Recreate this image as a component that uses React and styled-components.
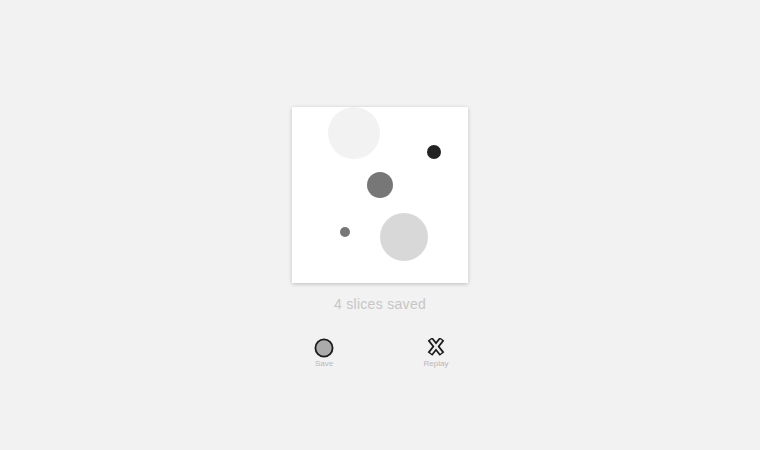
import React from "react";
import styled, { createGlobalStyle } from "styled-components";

const Global = createGlobalStyle`
  html, body { margin: 0; padding: 0; background: #f2f2f2; }
  body { font-family: "Liberation Sans", Arial, sans-serif; }
`;

const Page = styled.div`
  width: 760px;
  height: 450px;
  box-sizing: border-box;
  padding-top: 107px;
  display: flex;
  flex-direction: column;
  align-items: center;
  background: #f2f2f2;
`;

const Card = styled.div`
  position: relative;
  width: 176px;
  height: 176px;
  background: #ffffff;
  box-shadow: 0 1px 4px rgba(0, 0, 0, 0.22);
`;

const Dot = styled.div`
  position: absolute;
  border-radius: 50%;
  background: ${(p) => p.$color};
`;

const Caption = styled.div`
  margin-top: 12px;
  line-height: 18px;
  font-size: 14px;
  letter-spacing: 0.3px;
  color: #c6c6c6;
`;

const Actions = styled.div`
  margin-top: 25px;
  display: flex;
  gap: 52px;
`;

const Action = styled.button`
  width: 60px;
  padding: 0;
  border: 0;
  background: transparent;
  display: flex;
  flex-direction: column;
  align-items: center;
  cursor: pointer;
  font-family: inherit;
`;

const Label = styled.span`
  margin-top: 1px;
  font-size: 8px;
  line-height: 10px;
  color: #b8b8b8;
`;

const dots = [
  { x: 62, y: 26, r: 26, c: "#f2f2f2" },
  { x: 142, y: 45, r: 7, c: "#222222" },
  { x: 88, y: 78, r: 13, c: "#777777" },
  { x: 53, y: 125, r: 5, c: "#777777" },
  { x: 112, y: 130, r: 24, c: "#d8d8d8" },
];

const SaveIcon = () => (
  <svg width="20" height="20" viewBox="0 0 20 20">
    <circle cx="10" cy="10" r="8.6" fill="#ababab" stroke="#1c1c1c" strokeWidth="1.8" />
  </svg>
);

const ReplayIcon = () => (
  <svg width="20" height="20" viewBox="0 0 20 20">
    <g strokeLinecap="butt">
      <line x1="4" y1="1" x2="16" y2="16" stroke="#1c1c1c" strokeWidth="6" />
      <line x1="16" y1="1" x2="4" y2="16" stroke="#1c1c1c" strokeWidth="6" />
      <line x1="4.9" y1="2.1" x2="15.1" y2="14.9" stroke="#eeeeee" strokeWidth="2.4" />
      <line x1="15.1" y1="2.1" x2="4.9" y2="14.9" stroke="#eeeeee" strokeWidth="2.4" />
    </g>
  </svg>
);

export default function App() {
  return (
    <>
      <Global />
      <Page>
        <Card>
          {dots.map((d, i) => (
            <Dot
              key={i}
              $color={d.c}
              style={{ left: d.x - d.r, top: d.y - d.r, width: d.r * 2, height: d.r * 2 }}
            />
          ))}
        </Card>
        <Caption>4 slices saved</Caption>
        <Actions>
          <Action>
            <SaveIcon />
            <Label>Save</Label>
          </Action>
          <Action>
            <ReplayIcon />
            <Label>Replay</Label>
          </Action>
        </Actions>
      </Page>
    </>
  );
}
